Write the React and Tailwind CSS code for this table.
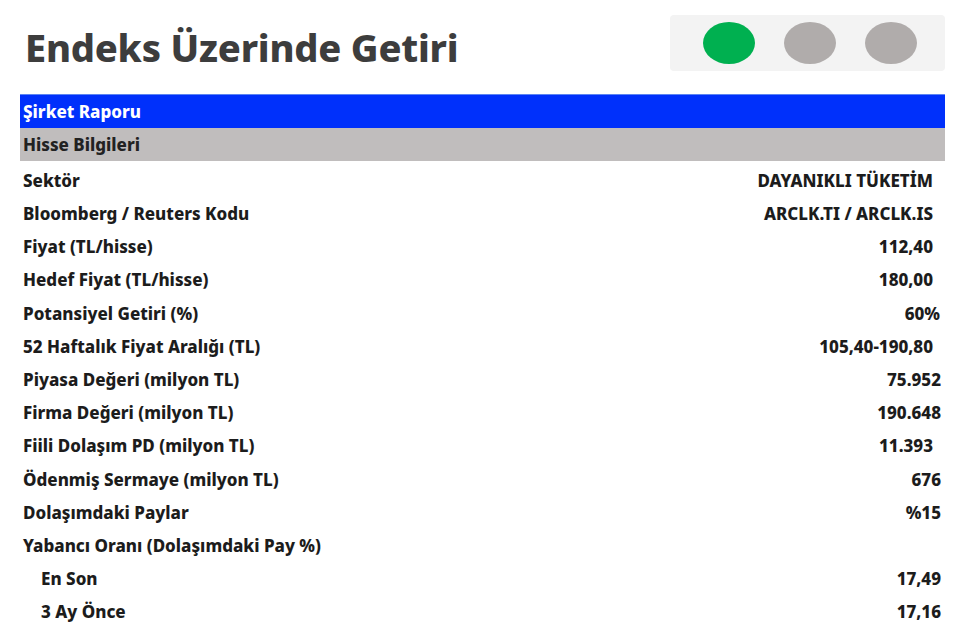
export default function App() {
  const rows = [
    ["Sektör", "DAYANIKLI TÜKETİM", "pr-[12px]", ""],
    ["Bloomberg / Reuters Kodu", "ARCLK.TI / ARCLK.IS", "pr-[12px]", ""],
    ["Fiyat (TL/hisse)", "112,40", "pr-[12px]", ""],
    ["Hedef Fiyat (TL/hisse)", "180,00", "pr-[12px]", ""],
    ["Potansiyel Getiri (%)", "60%", "pr-[5px]", ""],
    ["52 Haftalık Fiyat Aralığı (TL)", "105,40-190,80", "pr-[12px]", ""],
    ["Piyasa Değeri (milyon TL)", "75.952", "pr-[4px]", ""],
    ["Firma Değeri (milyon TL)", "190.648", "pr-[4px]", ""],
    ["Fiili Dolaşım PD (milyon TL)", "11.393", "pr-[12px]", ""],
    ["Ödenmiş Sermaye (milyon TL)", "676", "pr-[4px]", ""],
    ["Dolaşımdaki Paylar", "%15", "pr-[4px]", ""],
    ["Yabancı Oranı (Dolaşımdaki Pay %)", "", "pr-[4px]", ""],
    ["En Son", "17,49", "pr-[4px]", "pl-[21px]"],
    ["3 Ay Önce", "17,16", "pr-[4px]", "pl-[21px]"],
  ];
  return (
    <div className="w-[960px] h-[626px] bg-white overflow-hidden" style={{ fontFamily: '"Noto Sans", "DejaVu Sans", sans-serif' }}>
      <div className="h-[94px] flex items-start justify-between pl-[25px] pr-[15px] pt-[15px]">
        <h1 className="text-[38px] leading-[60px] font-extrabold text-[#3d3d3d] tracking-[-0.2px] mt-[2px]">Endeks Üzerinde Getiri</h1>
        <div className="w-[275px] h-[56px] bg-[#f3f3f3] rounded-[4px] flex items-center pl-[33px] gap-[29px]">
          <div className="w-[52px] h-[42px] rounded-[50%] bg-[#00b050]" />
          <div className="w-[52px] h-[42px] rounded-[50%] bg-[#b0acab]" />
          <div className="w-[52px] h-[42px] rounded-[50%] bg-[#b0acab]" />
        </div>
      </div>
      <div className="ml-[20px] mr-[15px] text-[17px] font-extrabold">
        <div className="h-[34px] bg-[#0030fb] border-t border-[#5c84f2] text-white flex items-center pl-[3px]">Şirket Raporu</div>
        <div className="h-[33px] bg-[#c0bdbd] text-[#222] flex items-center pl-[3px]">Hisse Bilgileri</div>
        <div className="pt-[3px]">
          {rows.map(([k, v, pr, pl], i) => (
            <div key={i} className={`h-[33.2px] flex items-center justify-between text-[#1c1c1c] ${pr}`}>
              <span className={`pl-[3px] ${pl}`}>{k}</span>
              <span>{v}</span>
            </div>
          ))}
        </div>
      </div>
    </div>
  );
}
